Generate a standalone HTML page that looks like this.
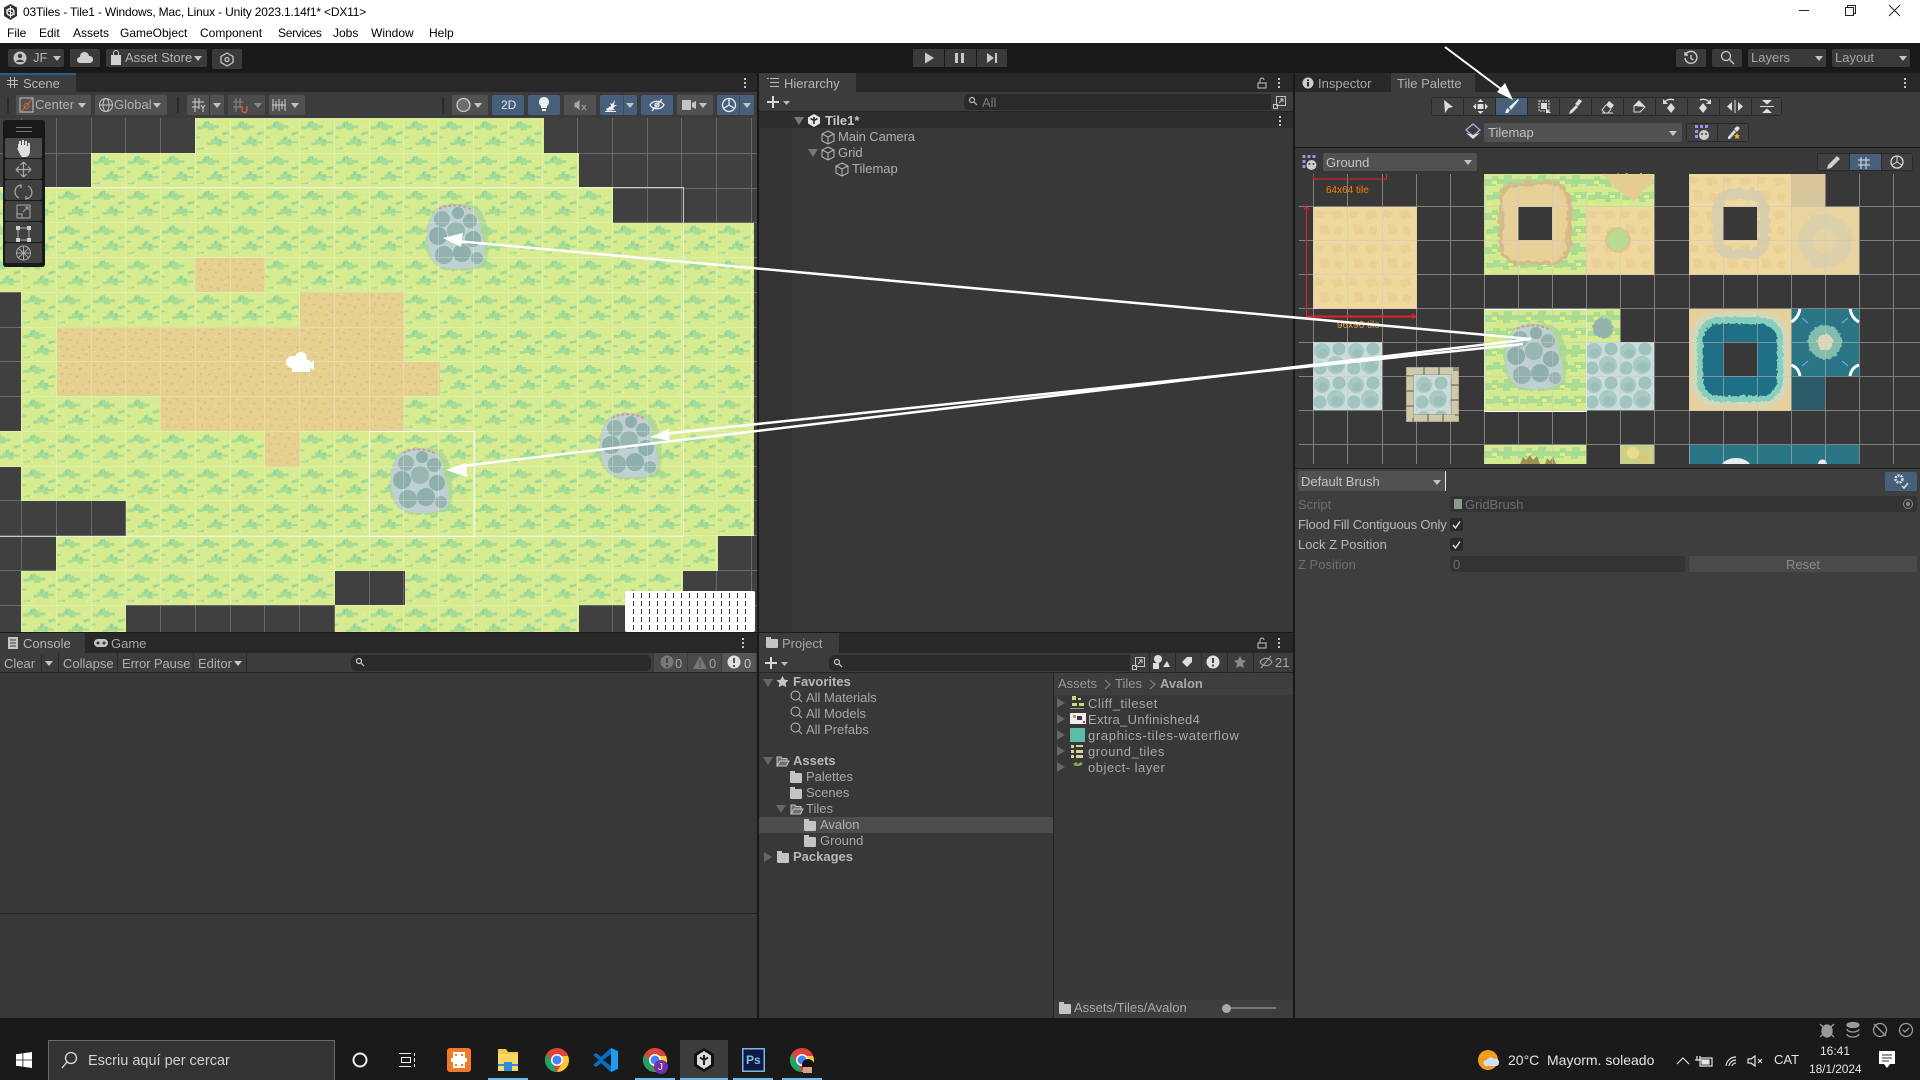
<!DOCTYPE html>
<html><head><meta charset="utf-8"><title>Unity Tile Palette</title>
<style>
html,body{margin:0;padding:0;width:1920px;height:1080px;overflow:hidden;background:#191919}
body{font:13px/16px "Liberation Sans",sans-serif;color:#bdbdbd;position:relative}
.a{position:absolute;white-space:nowrap}
.p{position:absolute}
.btn{position:absolute;background:#515151;border-radius:2px}
.top{background:#3a3a3a}
.blue{background:#46607c}
.c{position:absolute;width:0;height:0;border-left:4px solid transparent;border-right:4px solid transparent;border-top:5px solid #c4c4c4}
.tri{position:absolute;width:0;height:0;border-left:5px solid transparent;border-right:5px solid transparent;border-top:8px solid #666}
.tr{position:absolute;width:0;height:0;border-top:5px solid transparent;border-bottom:5px solid transparent;border-left:8px solid #666}
.m{font-size:12px;color:#000;top:25px;line-height:16px}
.dim{color:#7a7a7a}
.b{font-weight:bold}
.fold{position:absolute;width:12px;height:10px;background:#c4c4c4;border-radius:1px}
.fold:before{content:"";position:absolute;left:0;top:-2px;width:5px;height:3px;background:#c4c4c4}
.l{letter-spacing:.5px;color:#a8a8a8}
svg{position:absolute;overflow:visible}
</style></head><body>

<!-- title bar -->
<div class="p" style="left:0;top:0;width:1920px;height:43px;background:#fff"></div>
<svg style="left:3px;top:3px" width="15" height="18" viewBox="0 0 15 18"><path d="M7.5 1L14 4.5V13L7.5 17L1 13V4.500z" fill="#333"/><circle cx="7.500" cy="9" r="3.500" fill="none" stroke="#eee" stroke-width="1.500"/><path d="M7.500 3V15M3 6.500L12 11.500" stroke="#eee" stroke-width="1"/></svg>
<div class="a" style="left:23px;top:4px;font-size:12px;color:#000;letter-spacing:-.17px">03Tiles - Tile1 - Windows, Mac, Linux - Unity 2023.1.14f1* &lt;DX11&gt;</div>
<div class="a m" style="left:7px">File</div><div class="a m" style="left:39px">Edit</div><div class="a m" style="left:73px">Assets</div><div class="a m" style="left:120px">GameObject</div><div class="a m" style="left:200px">Component</div><div class="a m" style="left:278px;letter-spacing:-.3px">Services</div><div class="a m" style="left:333px">Jobs</div><div class="a m" style="left:371px">Window</div><div class="a m" style="left:429px">Help</div>
<svg style="left:1798px;top:3px" width="110" height="14" viewBox="0 0 110 14" fill="none" stroke="#222" stroke-width="1"><path d="M1 7.500H11"/><path d="M47.500 4.500H55.500V12.500H47.500zM49.500 4.500V2.500H57.500V10.500H55.500"/><path d="M91 2L102 13M102 2L91 13"/></svg>

<!-- main toolbar -->
<div class="btn top" style="left:8px;top:49px;width:56px;height:18px"></div>
<svg style="left:13px;top:51px" width="14" height="14" viewBox="0 0 14 14"><circle cx="7" cy="7" r="6.500" fill="#c4c4c4"/><circle cx="7" cy="5" r="2.200" fill="#3a3a3a"/><path d="M3 11c1-3 7-3 8 0" fill="#3a3a3a"/></svg>
<div class="a" style="left:33px;top:50px;color:#b5b5b5">JF</div><div class="c" style="left:53px;top:56px"></div>
<div class="btn top" style="left:70px;top:49px;width:30px;height:18px"></div>
<svg style="left:77px;top:52px" width="16" height="12" viewBox="0 0 16 12"><path d="M3 11a3 3 0 0 1 0-6a4.500 4.500 0 0 1 9-1a3.500 3.500 0 0 1 1 7z" fill="#d0d0d0"/></svg>
<div class="btn top" style="left:106px;top:49px;width:101px;height:18px"></div>
<svg style="left:110px;top:50px" width="12" height="16" viewBox="0 0 12 16"><rect x="1" y="5" width="10" height="10" fill="#d0d0d0"/><path d="M3.500 5V3a2.500 2.500 0 0 1 5 0V5" fill="none" stroke="#d0d0d0"/></svg>
<div class="a" style="left:125px;top:50px;color:#b5b5b5">Asset Store</div><div class="c" style="left:194px;top:56px"></div>
<div class="btn top" style="left:212px;top:49px;width:30px;height:20px"></div>
<svg style="left:220px;top:52px" width="14" height="15" viewBox="0 0 14 15" fill="none" stroke="#c4c4c4" stroke-width="1.300"><path d="M7 1L13 4.500V10.500L7 14L1 10.500V4.500z"/><circle cx="7" cy="7.500" r="2"/></svg>

<div class="btn top" style="left:913px;top:49px;width:31px;height:18px;border-radius:0"></div>
<div class="btn top" style="left:945px;top:49px;width:31px;height:18px;border-radius:0"></div>
<div class="btn top" style="left:977px;top:49px;width:30px;height:18px;border-radius:0"></div>
<svg style="left:913px;top:49px" width="94" height="18" viewBox="0 0 94 18" fill="#c8c8c8"><path d="M12 3.500L21 9L12 14.500z"/><rect x="42" y="4" width="3" height="10"/><rect x="48" y="4" width="3" height="10"/><path d="M74 4L81 9L74 14z"/><rect x="82" y="4" width="2" height="10"/></svg>

<div class="btn top" style="left:1676px;top:49px;width:30px;height:18px"></div>
<svg style="left:1683px;top:50px" width="16" height="16" viewBox="0 0 16 16" fill="none" stroke="#c8c8c8" stroke-width="1.400"><path d="M3 4a6 6 0 1 1-1 4M2 2V5H5M8 5V8.500L10.500 10"/></svg>
<div class="btn top" style="left:1712px;top:49px;width:30px;height:18px"></div>
<svg style="left:1720px;top:50px" width="15" height="16" viewBox="0 0 15 16" fill="none" stroke="#c8c8c8" stroke-width="1.300"><circle cx="6" cy="6" r="4.500"/><path d="M9.500 9.500L14 14"/></svg>
<div class="btn" style="left:1748px;top:49px;width:78px;height:18px;background:#3a3a3a"></div>
<div class="a" style="left:1751px;top:50px;color:#a5a5a5">Layers</div><div class="c" style="left:1815px;top:56px"></div>
<div class="btn" style="left:1832px;top:49px;width:78px;height:18px;background:#3a3a3a"></div>
<div class="a" style="left:1835px;top:50px;color:#a5a5a5">Layout</div><div class="c" style="left:1899px;top:56px"></div>

<!-- panels -->
<div class="p" style="left:0;top:73px;width:757px;height:559px;background:#282828;border-radius:3px 3px 0 0"></div>
<div class="p" style="left:0;top:73px;width:76px;height:19px;background:#3c3c3c"></div>
<div class="p" style="left:0;top:73px;width:76px;height:2px;background:#2c5d87"></div>
<div class="p" style="left:0;top:92px;width:757px;height:26px;background:#3c3c3c"></div>

<div class="p" style="left:759px;top:73px;width:534px;height:559px;background:#383838;border-radius:3px 3px 0 0"></div>
<div class="p" style="left:759px;top:73px;width:534px;height:19px;background:#282828"></div>
<div class="p" style="left:759px;top:73px;width:97px;height:19px;background:#3c3c3c"></div>
<div class="p" style="left:759px;top:92px;width:534px;height:20px;background:#3c3c3c;border-bottom:1px solid #242424;box-sizing:border-box"></div>
<div class="p" style="left:759px;top:128px;width:33px;height:504px;background:#333"></div>
<div class="p" style="left:759px;top:112px;width:534px;height:16px;background:#2e2e2e"></div>

<div class="p" style="left:1295px;top:73px;width:625px;height:945px;background:#3e3e3e"></div>
<div class="p" style="left:1295px;top:73px;width:625px;height:19px;background:#282828"></div>
<div class="p" style="left:1391px;top:73px;width:84px;height:19px;background:#3c3c3c"></div>
<div class="p" style="left:1295px;top:92px;width:625px;height:55px;background:#3c3c3c"></div>
<div class="p" style="left:1295px;top:147px;width:625px;height:1px;background:#1b1b1b"></div>
<div class="p" style="left:1295px;top:148px;width:625px;height:26px;background:#383838"></div>
<div class="p" style="left:1295px;top:174px;width:625px;height:295px;background:#383838"></div>
<div class="p" style="left:1295px;top:464px;width:625px;height:5px;background:#383838"></div>
<div class="p" style="left:1295px;top:468px;width:625px;height:1px;background:#222"></div>

<div class="p" style="left:0;top:633px;width:757px;height:385px;background:#383838;border-radius:3px 3px 0 0"></div>
<div class="p" style="left:0;top:633px;width:757px;height:20px;background:#282828"></div>
<div class="p" style="left:0;top:633px;width:85px;height:20px;background:#3c3c3c"></div>
<div class="p" style="left:0;top:653px;width:757px;height:20px;background:#3c3c3c;border-bottom:1px solid #242424;box-sizing:border-box"></div>
<div class="p" style="left:0;top:913px;width:757px;height:1px;background:#232323"></div>

<div class="p" style="left:759px;top:633px;width:534px;height:385px;background:#383838;border-radius:3px 3px 0 0"></div>
<div class="p" style="left:759px;top:633px;width:534px;height:20px;background:#282828"></div>
<div class="p" style="left:759px;top:633px;width:80px;height:20px;background:#3c3c3c"></div>
<div class="p" style="left:759px;top:653px;width:534px;height:20px;background:#3c3c3c;border-bottom:1px solid #242424;box-sizing:border-box"></div>
<div class="p" style="left:1054px;top:673px;width:239px;height:22px;background:#3e3e3e"></div>
<div class="p" style="left:1053px;top:673px;width:1px;height:345px;background:#242424"></div>
<div class="p" style="left:1054px;top:1000px;width:239px;height:18px;background:#3e3e3e"></div>

<!-- art -->
<svg style="left:0;top:0" width="1920" height="1080" viewBox="0 0 1920 1080">
<defs>
<filter id="r" x="-15%" y="-15%" width="130%" height="130%" color-interpolation-filters="sRGB"><feTurbulence type="fractalNoise" baseFrequency=".16" numOctaves="2" seed="3" result="n"/><feDisplacementMap in="SourceGraphic" in2="n" scale="8" xChannelSelector="R" yChannelSelector="G"/></filter>
<filter id="r2" x="-15%" y="-15%" width="130%" height="130%" color-interpolation-filters="sRGB"><feTurbulence type="fractalNoise" baseFrequency=".35" numOctaves="1" seed="8" result="n"/><feDisplacementMap in="SourceGraphic" in2="n" scale="5" xChannelSelector="R" yChannelSelector="G"/></filter>
<pattern id="g" patternUnits="userSpaceOnUse" x="21.300" y="118.300" width="34.750" height="34.800">
<rect width="35" height="35" fill="#d7ec90"/>
<path d="M2 8h5V6h3V3h4v2h4v2h6v3h-5v2h-6v-2h-5v1H2zM12 24h4v-3h3v-3h4v3h4v2h6v2h-6v3h-5v-2h-5v1h-5zM27 14h4v-1h3v3h-4v1h-3zM1 18h4v2H1zM2 30h4v-1h3v2H2z" fill="#a6dc94"/>
<path d="M9 4h2v4H9zM13 3h1v3h-1zM19 19h2v3h-2zM24 21h2v3h-2zM29 14h2v2h-2z" fill="#8bd2a0"/>
<path d="M28 9h2v1h-2zM1 14h2v1H1zM10 30h2v1h-2zM31 30h1v2h-1z" fill="#eef59e"/>
</pattern>
<pattern id="s" patternUnits="userSpaceOnUse" x="21.300" y="118.300" width="34.750" height="34.800">
<rect width="35" height="35" fill="#e5d08f"/>
<path d="M2 3h3v1H2zM9 5h2v2H9zM15 2h3v1h-3zM23 6h3v2h-3zM30 3h2v1h-2zM5 11h2v2H5zM13 12h3v1h-3zM20 14h2v2h-2zM28 12h3v1h-3zM3 19h3v1H3zM10 21h2v2h-2zM17 19h2v1h-2zM25 22h3v1h-3zM32 19h2v2h-2zM6 28h2v2H6zM14 29h3v1h-3zM22 30h2v2h-2zM29 27h3v1h-3z" fill="#d8bf80"/>
<path d="M7 2h1v1H7zM20 9h1v1h-1zM30 24h1v1h-1zM3 24h1v1H3zM16 25h1v1h-1z" fill="#f4e9c4"/>
</pattern>
<pattern id="pg" patternUnits="userSpaceOnUse" x="1484" y="174" width="34" height="34">
<rect width="34" height="34" fill="#d4ea8e"/>
<path d="M0 5h8V2h6v3h6V1h8v4h6v5h-8v3h-7v-3h-7v2H0zM2 21h7v-3h7v3h6v-3h12v7h-9v3h-6v-3h-9v1H2z" fill="#a8dd93"/>
<path d="M8 7h5v3H8zM24 21h5v3h-5zM3 28h4v3H3z" fill="#e9ec7e"/>
</pattern>
<pattern id="ps" patternUnits="userSpaceOnUse" x="1313" y="207" width="34" height="34">
<rect width="34" height="34" fill="#efd89e"/>
<path d="M3 3l9 2-3 6-7-1zM18 5l10-2 3 7-10 3zM6 17l9 1 2 8-9 2zM23 19l8 2-3 8-7-3z" fill="#e9d195"/>
</pattern>
<pattern id="st" patternUnits="userSpaceOnUse" x="1313" y="342" width="34" height="34">
<rect width="34" height="34" fill="#cbdcda"/>
<circle cx="9" cy="9" r="8" fill="#a6c8c2"/><circle cx="26" cy="7" r="6.500" fill="#9fc2bc"/><circle cx="7" cy="26" r="6.500" fill="#a1c4be"/><circle cx="23" cy="23" r="9" fill="#a9cac4"/>
<ellipse cx="10" cy="11" rx="5" ry="4.500" fill="#9cbfb9"/><ellipse cx="24" cy="25" rx="6" ry="5" fill="#9cbfb9"/>
</pattern>
<g id="rock">
<path d="M10 6C18-2 46-2 53 6C60 14 64 30 62 46C64 58 58 68 31 68C8 68 0 56 0 36C0 22 3 13 10 6z" fill="#a6d596" opacity=".75" filter="url(#r2)"/>
<path d="M14 4c8-4 24-4 32 2c6 6 8 14 9 24c3 10 6 22 2 30c-8 7-36 8-46 2c-8-8-10-20-10-32c0-10 5-20 13-26z" fill="#bfd0d0"/>
<circle cx="16" cy="16" r="8" fill="#96b5b1"/><circle cx="32" cy="10" r="6" fill="#8eafac"/><circle cx="44" cy="18" r="7" fill="#93b2ae"/><circle cx="12" cy="33" r="9" fill="#8eafac"/><circle cx="30" cy="28" r="9" fill="#98b7b3"/><circle cx="47" cy="36" r="8" fill="#8eafac"/><circle cx="18" cy="52" r="9" fill="#93b2ae"/><circle cx="36" cy="50" r="9" fill="#8eafac"/><circle cx="51" cy="55" r="6" fill="#96b5b1"/>
<path d="M13 6c8-5 24-5 33 1" fill="none" stroke="#c8a08c" stroke-width="2" stroke-dasharray="3 2"/>
</g>
</defs>

<!-- scene -->
<rect x="0" y="118" width="757" height="514" fill="url(#g)"/>
<path fill="#404040" d="M0 118h195v35H0zM544 118h213v35H544zM0 153h91v34H0zM579 153h178v34H579zM613 187h144v36H613zM754 223h3v313h-3zM0 292h21v139H0zM0 467h21v34H0zM0 501h126v35H0zM0 536h56v35H0zM0 571h21v61H0zM126 605h209v27H126zM335 571h70v34h-70zM718 536h39v35h-39zM683 571h74v61h-74zM579 605h104v27H579z"/>
<path fill="url(#s)" d="M195 258h70v34h-70zM300 292h104v35H300zM57 327h347v35H57zM57 362h383v34H57zM160 396h244v35H160zM265 431h35v36h-35z"/>
<use href="#rock" x="426" y="203"/><use href="#rock" x="599" y="412"/><use href="#rock" x="390" y="447"/>
<path stroke="#fff" stroke-opacity=".22" fill="none" d="M21.500 118V632M56.500 118V632M91.500 118V632M125.500 118V632M160.500 118V632M195.500 118V632M230.500 118V632M264.500 118V632M299.500 118V632M334.500 118V632M369.500 118V632M403.500 118V632M438.500 118V632M473.500 118V632M508.500 118V632M542.500 118V632M577.500 118V632M612.500 118V632M647.500 118V632M681.500 118V632M716.500 118V632M751.500 118V632M0 153.500H757M0 188.500H757M0 222.500H757M0 257.500H757M0 292.500H757M0 327.500H757M0 361.500H757M0 396.500H757M0 431.500H757M0 466.500H757M0 500.500H757M0 535.500H757M0 570.500H757M0 605.500H757"/>
<path stroke="#f2f7e8" stroke-opacity=".75" fill="none" d="M0 187.500H683.500V536.500H0"/>
<path stroke="#fff" fill="none" d="M369.500 431.500H474.500V536.500H369.500z"/>
<g fill="#fff"><circle cx="292" cy="362" r="6"/><circle cx="301" cy="358" r="6"/><rect x="292" y="360" width="18" height="12"/><path d="M310 363l4-3v10l-4-2z"/></g>
<rect x="625" y="591" width="130" height="41" rx="2" fill="#fff"/>
<g stroke="#333" stroke-width="1"><path d="M633.500 593v5M641.500 593v5M649.500 593v5M657.500 593v5M665.500 593v5M673.500 593v5M681.500 593v5M689.500 593v5M697.500 593v5M705.500 593v5M713.500 593v5M721.500 593v5M729.500 593v5M737.500 593v5M745.500 593v5"/><path d="M633.500 601v5M641.500 601v5M649.500 601v5M657.500 601v5M665.500 601v5M673.500 601v5M681.500 601v5M689.500 601v5M697.500 601v5M705.500 601v5M713.500 601v5M721.500 601v5M729.500 601v5M737.500 601v5M745.500 601v5"/><path d="M633.500 609v5M641.500 609v5M649.500 609v5M657.500 609v5M665.500 609v5M673.500 609v5M681.500 609v5M689.500 609v5M697.500 609v5M705.500 609v5M713.500 609v5M721.500 609v5M729.500 609v5M737.500 609v5M745.500 609v5"/><path d="M633.500 617v5M641.500 617v5M649.500 617v5M657.500 617v5M665.500 617v5M673.500 617v5M681.500 617v5M689.500 617v5M697.500 617v5M705.500 617v5M713.500 617v5M721.500 617v5M729.500 617v5M737.500 617v5M745.500 617v5"/><path d="M633.500 625v5M641.500 625v5M649.500 625v5M657.500 625v5M665.500 625v5M673.500 625v5M681.500 625v5M689.500 625v5M697.500 625v5M705.500 625v5M713.500 625v5M721.500 625v5M729.500 625v5M737.500 625v5M745.500 625v5"/></g>

<!-- palette tiles -->
<rect x="1313" y="207" width="104" height="102" fill="url(#ps)"/>
<rect x="1313" y="342" width="69" height="68" fill="url(#st)"/>
<rect x="1406" y="367" width="53" height="55" fill="#8f8f80"/><rect x="1414" y="375" width="37" height="39" fill="url(#st)"/><rect x="1410" y="371" width="45" height="47" fill="none" stroke="#cfc9a9" stroke-width="7" stroke-dasharray="13 2"/>
<!-- grass/sand -->
<rect x="1484" y="174" width="170" height="101" fill="url(#pg)"/>
<rect x="1586" y="207" width="68" height="68" fill="url(#ps)"/>
<path d="M1603 174h50v8c-8 6-14 16-20 20c-6-6-20-14-30-28z" fill="#e5cd92" filter="url(#r2)"/>
<g filter="url(#r2)"><circle cx="1618" cy="240" r="13" fill="#dcc48c"/><circle cx="1618" cy="240" r="10" fill="#b5de8e"/></g>
<g filter="url(#r)"><rect x="1499" y="181" width="72" height="84" rx="20" fill="#d5bb87"/><rect x="1503" y="186" width="64" height="75" rx="16" fill="#e8d198"/></g>
<rect x="1518" y="207" width="34" height="33" fill="#383838"/>
<!-- sand/water top -->
<rect x="1689" y="174" width="103" height="101" fill="url(#ps)"/>
<rect x="1791" y="174" width="34" height="33" fill="#d8c79c"/>
<rect x="1791" y="207" width="68" height="68" fill="#e9d4a0"/>
<circle cx="1825" cy="241" r="27" fill="#dbd0aa" filter="url(#r)"/>
<circle cx="1825" cy="241" r="12" fill="#e6d3a2" filter="url(#r2)"/>
<rect x="1718" y="194" width="46" height="60" rx="14" fill="none" stroke="#d9ceab" stroke-width="11" filter="url(#r)"/>
<rect x="1723" y="207" width="34" height="33" fill="#383838"/>
<!-- selected grass rock -->
<rect x="1484" y="309" width="103" height="102" fill="url(#pg)"/>
<rect x="1586" y="309" width="34" height="33" fill="url(#pg)"/>
<circle cx="1603" cy="328" r="10" fill="#93b4ad" filter="url(#r2)"/>
<rect x="1586" y="342" width="68" height="68" fill="url(#st)"/>
<use href="#rock" x="1504" y="323"/>
<rect x="1484.500" y="309.500" width="102" height="102" fill="none" stroke="#fff"/>
<!-- water -->
<rect x="1689" y="309" width="102" height="102" fill="#e7d09c"/>
<g filter="url(#r2)"><rect x="1692" y="312" width="96" height="95" rx="24" fill="#d3d8b8"/><rect x="1697" y="317" width="86" height="85" rx="22" fill="#84cfbd"/><rect x="1703" y="324" width="74" height="72" rx="16" fill="#1f6f86"/></g>
<rect x="1723" y="342" width="34" height="34" fill="#383838"/>
<rect x="1791" y="309" width="68" height="67" fill="#2a7687"/>
<circle cx="1825" cy="342" r="17" fill="#83bdae" filter="url(#r2)"/><circle cx="1825" cy="342" r="8" fill="#dcd9b4" filter="url(#r2)"/>
<path d="M1791 322c6-3 8-8 9-13M1859 322c-6-3-8-8-9-13M1791 365c6 2 8 6 9 11M1859 365c-6 2-8 6-9 11" fill="none" stroke="#fff" stroke-width="3"/>
<path d="M1802 318l6 5M1848 318l-6 5M1802 366l6-5M1848 366l-6-5" stroke="#7fb0e0" fill="none"/>
<rect x="1791" y="376" width="34" height="34" fill="#2c5a68"/>
<!-- bottom row -->
<rect x="1484" y="445" width="102" height="19" fill="url(#pg)"/>
<path d="M1520 464l3-7 3 3 4-5 3 5 4-4 3 8zM1545 464l2-6 3 3 3-4 3 7z" fill="#9b8f58"/>
<rect x="1620" y="445" width="34" height="19" fill="#c9d08a"/><circle cx="1633" cy="453" r="6" fill="#eadc88"/><circle cx="1644" cy="459" r="4" fill="#dcc874"/>
<rect x="1689" y="445" width="170" height="19" fill="#2a7687"/>
<path d="M1722 464c6-8 22-8 28 0zM1818 464c1-6 8-6 9 0z" fill="#e8eef0"/>
<path stroke="#c8c8c8" stroke-opacity=".5" fill="none" d="M1313.500 174V464M1347.500 174V464M1382.500 174V464M1416.500 174V464M1450.500 174V464M1484.500 174V464M1518.500 174V464M1552.500 174V464M1586.500 174V464M1620.500 174V464M1654.500 174V464M1689.500 174V464M1723.500 174V464M1757.500 174V464M1791.500 174V464M1825.500 174V464M1859.500 174V464M1893.500 174V464M1299 206.500H1920M1299 240.500H1920M1299 274.500H1920M1299 308.500H1920M1299 342.500H1920M1299 376.500H1920M1299 410.500H1920M1299 444.500H1920"/>
<!-- red measures -->
<path d="M1313.500 175v4h73v-5M1306.500 207V316" stroke="#e8202a" stroke-width="1" fill="none"/>
<path d="M1306 316.500H1415" stroke="#e8202a" stroke-width="2"/>
<path d="M1304 210l2.500-4 2.500 4M1412 314l4 2.500-4 2.500" stroke="#e8202a" fill="none"/>
</svg>
<div class="a" style="left:1326px;top:183px;font-size:10px;color:#ff7a00">64x64 tile</div>
<div class="a" style="left:1337px;top:318px;font-size:10px;color:#e8a040">96x96 tile</div>

<!-- scene tab + toolbar -->
<svg style="left:7px;top:77px" width="11" height="11" viewBox="0 0 11 11" stroke="#bbb" fill="none"><path d="M3.500 0V11M7.500 0V11M0 3.500H11M0 7.500H11"/></svg>
<div class="a" style="left:23px;top:76px;color:#b8b8b8">Scene</div>
<svg style="left:743px;top:76px" width="4" height="14" viewBox="0 0 4 14" fill="#c4c4c4"><rect x="1" y="2" width="2" height="2"/><rect x="1" y="6" width="2" height="2"/><rect x="1" y="10" width="2" height="2"/></svg>
<div class="p" style="left:7px;top:97px;width:2px;height:16px;background:#2a2a2a"></div>
<div class="btn" style="left:16px;top:95px;width:75px;height:20px"></div>
<svg style="left:19px;top:97px" width="15" height="16" viewBox="0 0 15 16"><rect x="1" y="1" width="13" height="14" fill="none" stroke="#c4c4c4"/><circle cx="7.500" cy="9" r="2.500" fill="none" stroke="#e0603c"/><path d="M3 14L13 2" stroke="#e0603c"/></svg>
<div class="a" style="left:35px;top:97px;color:#b0b0b0">Center</div><div class="c" style="left:78px;top:103px"></div>
<div class="btn" style="left:95px;top:95px;width:72px;height:20px"></div>
<svg style="left:98px;top:97px" width="16" height="16" viewBox="0 0 16 16" fill="none" stroke="#c4c4c4"><circle cx="8" cy="8" r="6.500"/><ellipse cx="8" cy="8" rx="3" ry="6.500"/><path d="M1.500 8H14.500"/></svg>
<div class="a" style="left:114px;top:97px;color:#b0b0b0">Global</div><div class="c" style="left:153px;top:103px"></div>
<div class="p" style="left:177px;top:97px;width:2px;height:16px;background:#2a2a2a"></div>
<div class="btn" style="left:187px;top:95px;width:37px;height:20px"></div>
<div class="p" style="left:209px;top:95px;width:1px;height:20px;background:#333"></div>
<svg style="left:191px;top:97px" width="15" height="16" viewBox="0 0 15 16" stroke="#d0d0d0" fill="none"><path d="M4 1V15M8 1V12M1 5H13M1 10H8M10 8l2 3 2-3M12 11v4"/></svg><div class="c" style="left:213px;top:103px"></div>
<div class="btn" style="left:228px;top:95px;width:37px;height:20px;opacity:.7"></div>
<svg style="left:232px;top:97px" width="16" height="16" viewBox="0 0 16 16" stroke="#888" fill="none"><path d="M4 1V15M8 1V11M1 5H11M1 10H9"/><path d="M10 9v4a2.500 2.500 0 0 0 5 0V9" stroke="#d85a30" stroke-width="1.500"/></svg><div class="c" style="left:254px;top:103px;border-top-color:#888"></div>
<div class="btn" style="left:269px;top:95px;width:36px;height:20px"></div>
<svg style="left:272px;top:98px" width="15" height="14" viewBox="0 0 15 14" stroke="#d0d0d0" fill="none"><path d="M1 1V13M4 3V11M7 1V13M10 3V11M13 1V13M0 7H14"/></svg><div class="c" style="left:291px;top:103px"></div>
<div class="p" style="left:442px;top:97px;width:2px;height:16px;background:#2a2a2a"></div>
<div class="btn" style="left:452px;top:95px;width:36px;height:20px"></div>
<svg style="left:456px;top:97px" width="15" height="16" viewBox="0 0 15 16"><circle cx="7.500" cy="8" r="6.500" fill="#6e6e6e" stroke="#c8c8c8" stroke-width="1.300"/><path d="M11 3a6 6 0 0 1-6 11a6 6 0 0 0 9-5" fill="#c8c8c8"/></svg><div class="c" style="left:474px;top:103px"></div>
<div class="btn blue" style="left:492px;top:95px;width:32px;height:20px"></div>
<div class="a" style="left:501px;top:97px;color:#e4e4e4;font-size:12px">2D</div>
<div class="btn blue" style="left:528px;top:95px;width:32px;height:20px"></div>
<svg style="left:538px;top:96px" width="12" height="18" viewBox="0 0 12 18" fill="#eee"><path d="M6 1a5 5 0 0 1 3 9v2H3v-2a5 5 0 0 1 3-9z"/><rect x="4" y="13" width="4" height="2"/></svg>
<div class="btn" style="left:564px;top:95px;width:32px;height:20px"></div>
<svg style="left:574px;top:98px" width="14" height="14" viewBox="0 0 14 14" stroke="#aaa" fill="#aaa"><path d="M1 5H3L5 3V11L3 9H1z"/><path d="M8 7l4 5M12 7l-4 5" fill="none"/></svg>
<div class="btn blue" style="left:600px;top:95px;width:37px;height:20px"></div>
<div class="p" style="left:623px;top:95px;width:1px;height:20px;background:#3a4d63"></div>
<svg style="left:603px;top:97px" width="17" height="16" viewBox="0 0 17 16" fill="#eee"><path d="M3 12l5-3-1-3 2 1 3-4-1 5 3 0-4 3 2 2-8 1z"/><path d="M2 14h11v1H2z"/></svg><div class="c" style="left:626px;top:103px"></div>
<div class="btn blue" style="left:641px;top:95px;width:32px;height:20px"></div>
<svg style="left:649px;top:97px" width="16" height="16" viewBox="0 0 16 16" stroke="#eee" fill="none" stroke-width="1.300"><path d="M1 8c3-5 11-5 14 0c-3 5-11 5-14 0z"/><circle cx="8" cy="8" r="2"/><path d="M3 14L13 2"/></svg>
<div class="btn" style="left:677px;top:95px;width:36px;height:20px"></div>
<svg style="left:682px;top:99px" width="14" height="12" viewBox="0 0 14 12" fill="#c4c4c4"><rect x="0" y="1" width="9" height="10"/><path d="M10 4l4-2v8l-4-2z"/></svg><div class="c" style="left:699px;top:103px"></div>
<div class="btn blue" style="left:717px;top:95px;width:37px;height:20px"></div>
<div class="p" style="left:739px;top:95px;width:1px;height:20px;background:#3a4d63"></div>
<svg style="left:721px;top:97px" width="16" height="16" viewBox="0 0 16 16" fill="none" stroke="#eee" stroke-width="1.300"><circle cx="8" cy="8" r="6.500"/><path d="M8 1.500V8M8 8L2.500 11.500M8 8L13.500 11.500"/></svg><div class="c" style="left:743px;top:103px"></div>

<!-- tools overlay -->
<div class="p" style="left:3px;top:120px;width:42px;height:147px;background:#191919;border-radius:3px"></div>
<div class="p" style="left:16px;top:127px;width:16px;height:1px;background:#777"></div><div class="p" style="left:16px;top:131px;width:16px;height:1px;background:#777"></div>
<div class="btn" style="left:5px;top:138px;width:37px;height:20px;background:#4c4c4c"></div>
<div class="btn" style="left:5px;top:159px;width:37px;height:20px;background:#404040"></div>
<div class="btn" style="left:5px;top:180px;width:37px;height:20px;background:#404040"></div>
<div class="btn" style="left:5px;top:201px;width:37px;height:20px;background:#404040"></div>
<div class="btn" style="left:5px;top:222px;width:37px;height:20px;background:#404040"></div>
<div class="btn" style="left:5px;top:243px;width:37px;height:20px;background:#404040"></div>
<svg style="left:5px;top:138px" width="37" height="126" viewBox="0 0 37 126">
<path d="M13 10V6h1V3h2v4h1V2h2v5h1V3h2v5h1V5h2v8c0 4-2 6-5 6h-3c-2-2-3-5-5-9z" fill="#ddd"/>
<path d="M18.500 24V39M11 31.500H26M18.500 24l-3 3M18.500 24l3 3M18.500 39l-3-3M18.500 39l3-3M11 31.500l3-3M11 31.500l3 3M26 31.500l-3-3M26 31.500l-3 3" stroke="#aaa" fill="none" stroke-width="1.200"/>
<path d="M23 48a7 7 0 0 1 1 12M14 60a7 7 0 0 1-1-12M13 48l3-1v3M24 60l-3 1v-3" stroke="#aaa" fill="none" stroke-width="1.200"/>
<path d="M12 67h13v13H12zM12 76h5v4M18 74l5-5M20 69h3v3" stroke="#aaa" fill="none"/>
<path d="M13 90h11v12H13z" stroke="#aaa" fill="none"/><path d="M11 88h4v4h-4zM22 88h4v4h-4zM11 100h4v4h-4zM22 100h4v4h-4z" fill="#ccc"/>
<circle cx="18.500" cy="115" r="7" stroke="#aaa" fill="none"/><path d="M18.500 108V122M11.500 115H25.500M13 110l11 10M24 110l-11 10" stroke="#aaa" fill="none"/>
</svg>

<!-- hierarchy -->
<svg style="left:767px;top:77px" width="12" height="11" viewBox="0 0 12 11" stroke="#bbb" fill="none"><path d="M3 1.500H12M3 5.500H12M3 9.500H12"/><path d="M0 1.500H2"/></svg>
<div class="a" style="left:784px;top:76px;color:#b8b8b8">Hierarchy</div>
<svg style="left:1256px;top:76px" width="30" height="14" viewBox="0 0 30 14" fill="none"><rect x="2" y="7" width="8" height="5" stroke="#c4c4c4"/><path d="M4 7V4a2 2 0 0 1 4 0" stroke="#c4c4c4"/><rect x="22" y="2" width="2" height="2" fill="#c4c4c4"/><rect x="22" y="6" width="2" height="2" fill="#c4c4c4"/><rect x="22" y="10" width="2" height="2" fill="#c4c4c4"/></svg>
<svg style="left:767px;top:96px" width="24" height="13" viewBox="0 0 24 13"><path d="M6 0V12M0 6H12" stroke="#d8d8d8" stroke-width="2"/><path d="M16 5h7l-3.500 4z" fill="#bbb"/></svg>
<div class="p" style="left:964px;top:94px;width:324px;height:16px;background:#2a2a2a;border-radius:5px"></div>
<svg style="left:968px;top:96px" width="12" height="12" viewBox="0 0 12 12" fill="none" stroke="#bbb" stroke-width="1.200"><circle cx="4" cy="4" r="2.500"/><path d="M6 6L9 9"/></svg>
<div class="a dim" style="left:982px;top:95px">All</div>
<div class="p" style="left:1271px;top:94px;width:17px;height:16px;background:#3c3c3c"></div>
<svg style="left:1273px;top:96px" width="13" height="13" viewBox="0 0 13 13" fill="none" stroke="#c4c4c4"><rect x="3.500" y="0.500" width="9" height="9"/><rect x="0.500" y="8.500" width="4" height="4"/><path d="M6 7L10 3M7 3h3v3"/></svg>
<div class="tri" style="left:794px;top:117px;border-top-color:#777"></div>
<svg style="left:807px;top:113px" width="14" height="15" viewBox="0 0 14 15"><path d="M7 1L13 4.500V10.500L7 14L1 10.500V4.500z" fill="#e8e8e8"/><path d="M7 4V11M3.500 5.500L7 7.500L10.500 5.500" stroke="#2e2e2e" stroke-width="1.600" fill="none"/></svg>
<div class="a b" style="left:825px;top:113px;color:#c8c8c8">Tile1*</div>
<svg style="left:1278px;top:115px" width="4" height="12" viewBox="0 0 4 12" fill="#c4c4c4"><rect x="1" y="1" width="2" height="2"/><rect x="1" y="5" width="2" height="2"/><rect x="1" y="9" width="2" height="2"/></svg>
<svg style="left:821px;top:130px" width="14" height="15" viewBox="0 0 14 15" fill="none" stroke="#bbb"><path d="M7 1L13 4V11L7 14L1 11V4zM1 4L7 7L13 4M7 7V14"/></svg>
<div class="a" style="left:838px;top:129px;color:#b0b0b0;letter-spacing:-.1px">Main Camera</div>
<div class="tri" style="left:808px;top:149px;border-top-color:#777"></div>
<svg style="left:821px;top:146px" width="14" height="15" viewBox="0 0 14 15" fill="none" stroke="#bbb"><path d="M7 1L13 4V11L7 14L1 11V4zM1 4L7 7L13 4M7 7V14"/></svg>
<div class="a" style="left:838px;top:145px;color:#b0b0b0">Grid</div>
<svg style="left:835px;top:162px" width="14" height="15" viewBox="0 0 14 15" fill="none" stroke="#bbb"><path d="M7 1L13 4V11L7 14L1 11V4zM1 4L7 7L13 4M7 7V14"/></svg>
<div class="a" style="left:852px;top:161px;color:#b0b0b0">Tilemap</div>

<!-- palette header -->
<svg style="left:1302px;top:77px" width="12" height="12" viewBox="0 0 12 12"><circle cx="6" cy="6" r="5.500" fill="#ccc"/><rect x="5" y="5" width="2" height="4.500" fill="#282828"/><rect x="5" y="2.500" width="2" height="1.600" fill="#282828"/></svg>
<div class="a" style="left:1318px;top:76px;color:#a8a8a8">Inspector</div>
<div class="a" style="left:1397px;top:76px;color:#b0b0b0">Tile Palette</div>
<svg style="left:1903px;top:76px" width="4" height="14" viewBox="0 0 4 14" fill="#c4c4c4"><rect x="1" y="2" width="2" height="2"/><rect x="1" y="6" width="2" height="2"/><rect x="1" y="10" width="2" height="2"/></svg>

<!-- palette tools -->
<div class="p" style="left:1431px;top:97px;width:351px;height:19px;background:#2a2a2a;border-radius:3px"></div>
<div class="p" style="left:1432px;top:98px;width:31px;height:17px;background:#404040"></div>
<div class="p" style="left:1464px;top:98px;width:31px;height:17px;background:#404040"></div>
<div class="p" style="left:1496px;top:98px;width:31px;height:17px;background:#46607c"></div>
<div class="p" style="left:1528px;top:98px;width:31px;height:17px;background:#404040"></div>
<div class="p" style="left:1560px;top:98px;width:31px;height:17px;background:#404040"></div>
<div class="p" style="left:1592px;top:98px;width:31px;height:17px;background:#404040"></div>
<div class="p" style="left:1624px;top:98px;width:31px;height:17px;background:#404040"></div>
<div class="p" style="left:1656px;top:98px;width:31px;height:17px;background:#404040"></div>
<div class="p" style="left:1688px;top:98px;width:31px;height:17px;background:#404040"></div>
<div class="p" style="left:1720px;top:98px;width:31px;height:17px;background:#404040"></div>
<div class="p" style="left:1752px;top:98px;width:29px;height:17px;background:#404040"></div>
<svg style="left:1431px;top:97px" width="352" height="19" viewBox="0 0 352 19" fill="#ddd">
<path d="M13 3L22 10L17.500 11L14 16z"/>
<path d="M49.500 2l3 3h-6zM49.500 17l3-3h-6zM42 9.500l3-3v6zM57 9.500l-3-3v6z"/><rect x="46.500" y="7" width="6" height="5"/>
<path d="M74 16l2-5 3 2-2 3zM78 10l9-8 1 1-8 10z" fill="#eee"/>
<path d="M108 4h10v10h-10z" fill="none" stroke="#ddd" stroke-dasharray="2 1"/><rect x="110" y="6" width="6" height="6"/><path d="M115 11l5 5h-5z"/>
<path d="M138 17l1-3 6-6 2 2-6 6zM145 6l3-4 3 2-3 4-1 1-3-2z"/>
<path d="M175 8l3-4 5 4-3 4z"/><path d="M175 8l-4 5 3 3h3l3-4M171 16h11" fill="none" stroke="#ddd"/>
<path d="M203 15V9l5-5 6 6-5 5z" fill="none" stroke="#ddd"/><path d="M203 9l5-5 6 6z"/>
<path d="M240 6l4 5-4 5-4-5z"/><path d="M233 6a8 8 0 0 1 10-3" fill="none" stroke="#ddd" stroke-width="1.300"/><path d="M232 2v5h5z"/>
<path d="M272 6l4 5-4 5-4-5z"/><path d="M279 6a8 8 0 0 0-10-3" fill="none" stroke="#ddd" stroke-width="1.300"/><path d="M280 2v5h-5z"/>
<path d="M301 5v9l-5-4.500zM307 5v9l5-4.500z"/><path d="M304 3V16" stroke="#ddd"/>
<path d="M331 3h10l-5 4.500zM331 16h10l-5-4.500z"/><path d="M329 9.500h14" stroke="#ddd"/>
</svg>
<svg style="left:1465px;top:123px" width="16" height="18" viewBox="0 0 16 18"><path d="M8 1L15 7L8 13L1 7z" fill="none" stroke="#b8a8e8" stroke-width="1.300"/><path d="M1 10L8 16L15 10L8 12z" fill="#ddd"/></svg>
<div class="btn" style="left:1484px;top:123px;width:198px;height:19px;background:#515151"></div>
<div class="a" style="left:1488px;top:125px;color:#c4c4c4">Tilemap</div><div class="c" style="left:1669px;top:131px"></div>
<div class="p" style="left:1686px;top:123px;width:63px;height:19px;background:#2a2a2a;border-radius:3px"></div>
<div class="p" style="left:1687px;top:124px;width:30px;height:17px;background:#404040"></div><div class="p" style="left:1718px;top:124px;width:30px;height:17px;background:#404040"></div>
<svg style="left:1695px;top:125px" width="14" height="15" viewBox="0 0 14 15"><path d="M0 0h3v3H0zM5 0h3v3H5zM10 0h3v3h-3zM0 5h3v3H0zM0 10h3v3H0z" fill="#a78cf0"/><circle cx="9" cy="10" r="5" fill="#ccc"/><circle cx="7" cy="9" r="1" fill="#444"/><circle cx="11" cy="9" r="1" fill="#444"/></svg>
<svg style="left:1726px;top:125px" width="15" height="15" viewBox="0 0 15 15"><path d="M2 12l6-7 2 2-6 7H2zM8 4l3-3 3 2-3 4z" fill="#ddd"/><path d="M11 8l1 2 2 .3-1.500 1.500.4 2.200-1.900-1-1.900 1 .4-2.200L8 10.300l2-.3z" fill="#f4b400"/></svg>

<svg style="left:1302px;top:155px" width="15" height="15" viewBox="0 0 14 15"><path d="M0 0h3v3H0zM5 0h3v3H5zM10 0h3v3h-3zM0 5h3v3H0zM0 10h3v3H0z" fill="#a78cf0"/><circle cx="9" cy="10" r="5" fill="#ccc"/><circle cx="7" cy="9" r="1" fill="#444"/><circle cx="11" cy="9" r="1" fill="#444"/></svg>
<div class="btn" style="left:1323px;top:153px;width:154px;height:18px;background:#515151"></div>
<div class="a" style="left:1326px;top:155px;color:#c4c4c4">Ground</div><div class="c" style="left:1464px;top:160px"></div>
<div class="p" style="left:1817px;top:153px;width:96px;height:18px;background:#2a2a2a;border-radius:3px"></div>
<div class="p" style="left:1818px;top:154px;width:31px;height:16px;background:#404040"></div><div class="p" style="left:1850px;top:154px;width:31px;height:16px;background:#46607c"></div><div class="p" style="left:1882px;top:154px;width:30px;height:16px;background:#404040"></div>
<svg style="left:1825px;top:154px" width="85" height="16" viewBox="0 0 85 16"><path d="M2 15l1-4 9-9 3 3-9 9z" fill="#d0d0d0"/><path d="M36 3V15M41 3V15M33 6H45M33 11H45" stroke="#e0e0e0" fill="none"/><circle cx="72" cy="8" r="6" stroke="#d8d8d8" stroke-width="1.300" fill="none"/><path d="M72 2V8M72 8L67 11M72 8L77 11" stroke="#d8d8d8" fill="none"/></svg>

<!-- brush -->
<div class="btn" style="left:1298px;top:471px;width:147px;height:20px;background:#515151"></div>
<div class="a" style="left:1301px;top:474px;color:#c4c4c4">Default Brush</div><div class="c" style="left:1433px;top:480px"></div>
<div class="p" style="left:1445px;top:471px;width:1px;height:20px;background:#e8e8e8"></div>
<div class="btn blue" style="left:1885px;top:472px;width:32px;height:19px"></div>
<svg style="left:1893px;top:473px" width="16" height="16" viewBox="0 0 16 16" fill="none"><circle cx="6" cy="6" r="3.500" stroke="#ddd" stroke-width="2.500" stroke-dasharray="2 1"/><path d="M9 13l2 2 4-5" stroke="#ddd" stroke-width="1.500"/></svg>
<div class="a" style="left:1298px;top:497px;color:#6e6e6e">Script</div>
<div class="p" style="left:1450px;top:496px;width:467px;height:16px;background:#333;border-radius:3px"></div>
<div class="p" style="left:1454px;top:499px;width:8px;height:10px;background:#8a9a8a"></div>
<div class="a" style="left:1465px;top:497px;color:#6e6e6e">GridBrush</div>
<svg style="left:1902px;top:498px" width="12" height="12" viewBox="0 0 12 12" fill="none" stroke="#888"><circle cx="6" cy="6" r="4.500"/><circle cx="6" cy="6" r="1.500" fill="#888"/></svg>
<div class="a" style="left:1298px;top:517px;color:#b8b8b8;letter-spacing:-.15px">Flood Fill Contiguous Only</div>
<div class="p" style="left:1450px;top:518px;width:13px;height:13px;background:#2a2a2a;border-radius:2px"></div>
<div class="a" style="left:1298px;top:537px;color:#b8b8b8">Lock Z Position</div>
<div class="p" style="left:1450px;top:538px;width:13px;height:13px;background:#2a2a2a;border-radius:2px"></div>
<svg style="left:1450px;top:518px" width="13" height="33" viewBox="0 0 13 33" fill="none" stroke="#e0e0e0" stroke-width="1.400"><path d="M3 7L5.500 10L10 3.500M3 27L5.500 30L10 23.500"/></svg>
<div class="a" style="left:1298px;top:557px;color:#6e6e6e">Z Position</div>
<div class="p" style="left:1450px;top:556px;width:235px;height:16px;background:#333;border-radius:3px"></div>
<div class="a" style="left:1453px;top:557px;color:#6e6e6e">0</div>
<div class="p" style="left:1689px;top:556px;width:228px;height:16px;background:#4a4a4a;border-radius:2px"></div>
<div class="a" style="left:1786px;top:557px;color:#8a8a8a">Reset</div>

<!-- console -->
<svg style="left:8px;top:637px" width="10" height="12" viewBox="0 0 10 12"><rect width="10" height="12" fill="#c4c4c4"/><path d="M2 3h6M2 6h6M2 9h6" stroke="#3c3c3c"/></svg>
<div class="a" style="left:23px;top:636px;color:#b8b8b8">Console</div>
<svg style="left:94px;top:639px" width="14" height="9" viewBox="0 0 14 9"><rect y="0" width="14" height="8" rx="4" fill="#c4c4c4"/><circle cx="4" cy="4" r="1.500" fill="#333"/><circle cx="10" cy="4" r="1.500" fill="#333"/></svg>
<div class="a" style="left:111px;top:636px;color:#a8a8a8">Game</div>
<svg style="left:741px;top:636px" width="4" height="14" viewBox="0 0 4 14" fill="#c4c4c4"><rect x="1" y="2" width="2" height="2"/><rect x="1" y="6" width="2" height="2"/><rect x="1" y="10" width="2" height="2"/></svg>
<div class="a" style="left:4px;top:656px;color:#b0b0b0">Clear</div>
<div class="p" style="left:41px;top:654px;width:1px;height:18px;background:#2a2a2a"></div><div class="c" style="left:45px;top:661px"></div>
<div class="p" style="left:58px;top:653px;width:1px;height:20px;background:#2a2a2a"></div>
<div class="a" style="left:63px;top:656px;color:#b0b0b0">Collapse</div>
<div class="p" style="left:117px;top:653px;width:1px;height:20px;background:#2a2a2a"></div>
<div class="a" style="left:122px;top:656px;color:#b0b0b0;letter-spacing:-.1px">Error Pause</div>
<div class="p" style="left:193px;top:653px;width:1px;height:20px;background:#2a2a2a"></div>
<div class="a" style="left:198px;top:656px;color:#b0b0b0">Editor</div><div class="c" style="left:234px;top:661px"></div>
<div class="p" style="left:246px;top:653px;width:1px;height:20px;background:#2a2a2a"></div>
<div class="p" style="left:351px;top:655px;width:300px;height:16px;background:#2a2a2a;border-radius:5px"></div>
<svg style="left:355px;top:657px" width="12" height="12" viewBox="0 0 12 12" fill="none" stroke="#ccc" stroke-width="1.200"><circle cx="4" cy="4" r="2.500"/><path d="M6 6L9 9"/></svg>
<div class="p" style="left:654px;top:653px;width:33px;height:19px;background:#4a4a4a"></div><div class="p" style="left:688px;top:653px;width:33px;height:19px;background:#4a4a4a"></div><div class="p" style="left:722px;top:653px;width:34px;height:19px;background:#555"></div>
<svg style="left:660px;top:655px" width="90" height="16" viewBox="0 0 90 16"><circle cx="7" cy="7" r="6.500" fill="#777"/><path d="M7 3v5M7 10v2" stroke="#444" stroke-width="2"/><path d="M40 1L47 14H33z" fill="#777"/><path d="M40 5v5M40 11v2" stroke="#444"/><circle cx="74" cy="7" r="6.500" fill="#e0e0e0"/><path d="M74 3v5M74 10v2" stroke="#555" stroke-width="2"/></svg>
<div class="a dim" style="left:675px;top:656px;color:#a0a0a0">0</div><div class="a" style="left:709px;top:656px;color:#a0a0a0">0</div><div class="a" style="left:744px;top:656px;color:#c0c0c0">0</div>

<!-- project -->
<div class="fold" style="left:766px;top:639px;width:12px;height:9px"></div>
<div class="a" style="left:782px;top:636px;color:#a8a8a8">Project</div>
<svg style="left:1256px;top:636px" width="30" height="14" viewBox="0 0 30 14" fill="none"><rect x="2" y="7" width="8" height="5" stroke="#c4c4c4"/><path d="M4 7V4a2 2 0 0 1 4 0" stroke="#c4c4c4"/><rect x="22" y="2" width="2" height="2" fill="#c4c4c4"/><rect x="22" y="6" width="2" height="2" fill="#c4c4c4"/><rect x="22" y="10" width="2" height="2" fill="#c4c4c4"/></svg>
<svg style="left:765px;top:657px" width="24" height="13" viewBox="0 0 24 13"><path d="M6 0V12M0 6H12" stroke="#d8d8d8" stroke-width="2"/><path d="M16 5h7l-3.500 4z" fill="#bbb"/></svg>
<div class="p" style="left:829px;top:655px;width:318px;height:16px;background:#2a2a2a;border-radius:5px"></div>
<svg style="left:833px;top:658px" width="12" height="12" viewBox="0 0 12 12" fill="none" stroke="#ccc" stroke-width="1.200"><circle cx="4" cy="4" r="2.500"/><path d="M6 6L9 9"/></svg>
<div class="p" style="left:1130px;top:655px;width:17px;height:16px;background:#3c3c3c"></div>
<svg style="left:1132px;top:657px" width="13" height="13" viewBox="0 0 13 13" fill="none" stroke="#c4c4c4"><rect x="3.500" y="0.500" width="9" height="9"/><rect x="0.500" y="8.500" width="4" height="4"/><path d="M6 7L10 3M7 3h3v3"/></svg>
<svg style="left:1151px;top:654px" width="140" height="18" viewBox="0 0 140 18"><circle cx="7" cy="5" r="4" fill="#ddd"/><rect x="2" y="9" width="6" height="6" fill="#ddd"/><path d="M12 13l4-6 3 6z" fill="#ddd"/></svg>
<svg style="left:1150px;top:654px" width="140" height="18" viewBox="0 0 140 18"><path d="M32 8l5-5h5v5l-5 5z" fill="#ddd"/><circle cx="63" cy="8" r="6.500" fill="#e0e0e0"/><path d="M63 4v5M63 10.500v2" stroke="#444" stroke-width="2"/><path d="M90 2l2 4 4 .5-3 3 .8 4.500-3.800-2-3.800 2 .8-4.500-3-3 4-.5z" fill="#8a8a8a"/><path d="M110 8c3-5 9-5 12 0c-3 5-9 5-12 0zM111 14L121 2" stroke="#aaa" fill="none"/></svg>
<div class="a" style="left:1275px;top:655px;color:#a8a8a8">21</div>
<div class="p" style="left:1175px;top:653px;width:1px;height:20px;background:#2a2a2a"></div><div class="p" style="left:1201px;top:653px;width:1px;height:20px;background:#2a2a2a"></div><div class="p" style="left:1227px;top:653px;width:1px;height:20px;background:#2a2a2a"></div><div class="p" style="left:1253px;top:653px;width:1px;height:20px;background:#2a2a2a"></div><div class="p" style="left:1149px;top:653px;width:1px;height:20px;background:#2a2a2a"></div>
<div class="tri" style="left:763px;top:679px"></div>
<svg style="left:776px;top:675px" width="13" height="13" viewBox="0 0 14 14"><path d="M7 1l2 4 4.500.6-3.200 3 .8 4.400L7 11l-4.100 2 .8-4.400-3.200-3L5 5z" fill="#c4c4c4"/></svg>
<div class="a b" style="left:793px;top:674px;color:#b8b8b8">Favorites</div>
<svg style="left:790px;top:690px" width="13" height="46" viewBox="0 0 13 46" fill="none" stroke="#bbb"><circle cx="5.500" cy="5.500" r="4.500"/><path d="M9 9l3 3"/><circle cx="5.500" cy="21.500" r="4.500"/><path d="M9 25l3 3"/><circle cx="5.500" cy="37.500" r="4.500"/><path d="M9 41l3 3"/></svg>
<div class="a" style="left:806px;top:690px;color:#a8a8a8">All Materials</div>
<div class="a" style="left:806px;top:706px;color:#a8a8a8">All Models</div>
<div class="a" style="left:806px;top:722px;color:#a8a8a8">All Prefabs</div>
<div class="tri" style="left:763px;top:757px"></div>
<svg style="left:776px;top:755px" width="14" height="12" viewBox="0 0 14 12" fill="none" stroke="#c4c4c4"><path d="M1 11V2h4l1 1.500h5V6M1 11l3-5h9l-2.500 5z" fill="#c4c4c4" fill-opacity=".4"/></svg>
<div class="a b" style="left:793px;top:753px;color:#b8b8b8">Assets</div>
<div class="fold" style="left:790px;top:773px"></div><div class="a" style="left:806px;top:769px;color:#a8a8a8">Palettes</div>
<div class="fold" style="left:790px;top:789px"></div><div class="a" style="left:806px;top:785px;color:#a8a8a8">Scenes</div>
<div class="tri" style="left:776px;top:805px"></div>
<svg style="left:790px;top:803px" width="14" height="12" viewBox="0 0 14 12" fill="none" stroke="#c4c4c4"><path d="M1 11V2h4l1 1.500h5V6M1 11l3-5h9l-2.500 5z" fill="#c4c4c4" fill-opacity=".4"/></svg>
<div class="a" style="left:806px;top:801px;color:#a8a8a8">Tiles</div>
<div class="p" style="left:759px;top:817px;width:294px;height:16px;background:#4d4d4d"></div>
<div class="fold" style="left:804px;top:821px"></div><div class="a" style="left:820px;top:817px;color:#b0b0b0">Avalon</div>
<div class="fold" style="left:804px;top:837px"></div><div class="a" style="left:820px;top:833px;color:#a8a8a8">Ground</div>
<div class="tr" style="left:764px;top:852px"></div>
<div class="fold" style="left:777px;top:853px"></div><div class="a b" style="left:793px;top:849px;color:#b8b8b8">Packages</div>
<div class="a" style="left:1058px;top:676px;color:#999">Assets</div>
<svg style="left:1103px;top:679px" width="10" height="11" viewBox="0 0 10 11" fill="none" stroke="#888"><path d="M2 1L7 5.500L2 10"/></svg>
<div class="a" style="left:1115px;top:676px;color:#999">Tiles</div>
<svg style="left:1148px;top:679px" width="10" height="11" viewBox="0 0 10 11" fill="none" stroke="#888"><path d="M2 1L7 5.500L2 10"/></svg>
<div class="a b" style="left:1160px;top:676px;color:#a8a8a8">Avalon</div>
<div class="tr" style="left:1057px;top:698px"></div><div class="tr" style="left:1057px;top:714px"></div><div class="tr" style="left:1057px;top:730px"></div><div class="tr" style="left:1057px;top:746px"></div><div class="tr" style="left:1057px;top:762px"></div>
<svg style="left:1070px;top:695px" width="16" height="80" viewBox="0 0 16 80"><path d="M2 1h4v4H2zM8 3h3v2H8zM2 8h5v3H2zM9 8h5v3H9z" fill="#c6d97a"/><path d="M0 13h14v1H0z" fill="#999"/><rect y="18" width="16" height="11" fill="#eee"/><rect x="7" y="21" width="5" height="4" fill="#443344"/><rect x="3" y="20" width="3" height="3" fill="#b59a8a"/><rect x="13" y="26" width="2" height="2" fill="#d33"/><rect x="0" y="33" width="15" height="14" fill="#5cbca8"/><path d="M1 50h3v3H1zM6 50h7v2H6zM1 55h3v3H1zM6 55h7v3H6zM1 60h3v3H1zM6 60h7v3H6z" fill="#d8cf90"/><path d="M3 69l3-2 2 2 3-2 2 2-3 2h-5z" fill="#87a65a"/></svg>
<div class="a l" style="left:1088px;top:696px">Cliff_tileset</div>
<div class="a l" style="left:1088px;top:712px;letter-spacing:.35px">Extra_Unfinished4</div>
<div class="a l" style="left:1088px;top:728px;letter-spacing:.65px">graphics-tiles-waterflow</div>
<div class="a l" style="left:1088px;top:744px">ground_tiles</div>
<div class="a l" style="left:1088px;top:760px">object- layer</div>
<div class="fold" style="left:1059px;top:1004px"></div><div class="a" style="left:1074px;top:1000px;color:#a8a8a8">Assets/Tiles/Avalon</div>
<div class="p" style="left:1226px;top:1007px;width:50px;height:2px;background:#777"></div>
<div class="p" style="left:1222px;top:1004px;width:9px;height:9px;border-radius:5px;background:#aaa"></div>

<!-- status icons -->
<svg style="left:1818px;top:1021px" width="100" height="18" viewBox="0 0 100 18" fill="none" stroke="#9a9a9a" stroke-width="1.300"><path d="M2 3l14 13M16 3L2 16"/><ellipse cx="9" cy="10" rx="5" ry="6" fill="#9a9a9a"/><ellipse cx="35" cy="4" rx="6" ry="2.500" fill="#9a9a9a"/><path d="M29 8c0 4 12 4 12 0M29 13c0 4 12 4 12 0"/><circle cx="62" cy="9" r="6.500"/><path d="M56 3L68 15"/><circle cx="88" cy="9" r="6.500"/><path d="M85 9l2 2 4-4"/></svg>

<!-- taskbar -->
<div class="p" style="left:0;top:1040px;width:1920px;height:40px;background:#1a1a1a"></div>
<svg style="left:16px;top:1052px" width="16" height="16" viewBox="0 0 16 16" fill="#fff"><path d="M0 2.300L6.500 1.400V7.600H0zM7.300 1.300L16 0V7.600H7.300zM0 8.400H6.500V14.600L0 13.700zM7.300 8.400H16V16L7.300 14.700z"/></svg>
<div class="p" style="left:48px;top:1040px;width:287px;background:#333;border:1px solid #6a6a6a;border-bottom:0;box-sizing:border-box;height:40px"></div>
<svg style="left:60px;top:1051px" width="18" height="18" viewBox="0 0 18 18" fill="none" stroke="#ddd" stroke-width="1.300"><circle cx="11" cy="7" r="5.500"/><path d="M7 11L2 17"/></svg>
<div class="a" style="left:88px;top:1053px;font-size:14.5px;color:#d2d2d2">Escriu aquí per cercar</div>
<svg style="left:352px;top:1052px" width="16" height="16" viewBox="0 0 16 16"><circle cx="8" cy="8" r="6.500" fill="none" stroke="#eee" stroke-width="2"/></svg>
<svg style="left:399px;top:1052px" width="17" height="16" viewBox="0 0 17 16" fill="none" stroke="#eee"><path d="M0 1.500H12M0 14.500H12M2.500 5.500H11.500V10.500H2.500zM15.500 1V4M15.500 6V10M15.500 12V15"/></svg>
<svg style="left:447px;top:1048px" width="24" height="24" viewBox="0 0 24 24"><rect width="24" height="24" rx="3" fill="#f07a28"/><path d="M7 5H11V9H7zM13 5H17V9H13zM7 15H11V19H7zM13 15H17V19H13zM5 11H19V13H5z" fill="none" stroke="#fff" stroke-width="2"/></svg>
<svg style="left:496px;top:1048px" width="24" height="24" viewBox="0 0 24 24"><path d="M2 1H10L12 4H22V23H2z" fill="#f5c84c"/><rect x="2" y="6" width="20" height="17" fill="#fbd764"/><rect x="8" y="14" width="8" height="9" fill="#2b8fd8"/><rect x="2" y="16" width="6" height="2" fill="#2b8fd8"/><rect x="16" y="16" width="6" height="2" fill="#2b8fd8"/></svg>
<svg style="left:545px;top:1048px" width="24" height="24" viewBox="0 0 24 24"><circle cx="12" cy="12" r="12" fill="#dd4437"/><path d="M12 24a12 12 0 0 1-10.400-18L7 14.500 12 24z" fill="#1da462"/><path d="M24 12A12 12 0 0 1 12 24l5-9 0-7h6a12 12 0 0 1 1 4z" fill="#fcc933"/><circle cx="12" cy="12" r="6" fill="#fff"/><circle cx="12" cy="12" r="4.500" fill="#4285f4"/></svg>
<svg style="left:593px;top:1048px" width="26" height="24" viewBox="0 0 26 24"><path d="M18 0L25 3V21L18 24L6 12z" fill="#1f9cf0"/><path d="M18 0V24L8 15L3 19L0 17L6 12L0 7L3 5L8 9z" fill="#0a6fc2"/><path d="M18 6L10 12L18 18z" fill="#1a1a1a"/></svg>
<svg style="left:643px;top:1048px" width="26" height="26" viewBox="0 0 26 26"><circle cx="12" cy="12" r="12" fill="#dd4437"/><path d="M12 24a12 12 0 0 1-10.400-18L7 14.500 12 24z" fill="#1da462"/><path d="M24 12A12 12 0 0 1 12 24l5-9 0-7h6a12 12 0 0 1 1 4z" fill="#fcc933"/><circle cx="12" cy="12" r="6" fill="#fff"/><circle cx="12" cy="12" r="4.500" fill="#4285f4"/><circle cx="18" cy="19" r="7" fill="#7030a8"/></svg>
<div class="a" style="left:658px;top:1061px;font-size:10px;line-height:14px;color:#fff">J</div>
<div class="p" style="left:680px;top:1040px;width:48px;height:40px;background:#3d3d3d"></div>
<svg style="left:693px;top:1048px" width="22" height="24" viewBox="0 0 22 24"><path d="M11 0L21 6V18L11 24L1 18V6z" fill="#111"/><path d="M11 3L18 7.500V16.500L11 21L4 16.500V7.500z" fill="#ddd"/><path d="M11 7V17M7 9.500L11 12L15 9.500" stroke="#222" stroke-width="2" fill="none"/></svg>
<svg style="left:742px;top:1048px" width="23" height="24" viewBox="0 0 23 24"><rect width="23" height="24" fill="#7fb4e8"/><rect x="1.500" y="1.500" width="20" height="21" fill="#0c1a40"/></svg>
<div class="a b" style="left:746px;top:1052px;font-size:12px;color:#7fc4f0">Ps</div>
<svg style="left:790px;top:1048px" width="26" height="26" viewBox="0 0 26 26"><circle cx="12" cy="12" r="12" fill="#dd4437"/><path d="M12 24a12 12 0 0 1-10.400-18L7 14.500 12 24z" fill="#1da462"/><path d="M24 12A12 12 0 0 1 12 24l5-9 0-7h6a12 12 0 0 1 1 4z" fill="#fcc933"/><circle cx="12" cy="12" r="6" fill="#fff"/><circle cx="12" cy="12" r="4.500" fill="#4285f4"/><circle cx="18" cy="17" r="6" fill="#111"/><rect x="13" y="19" width="9" height="6" fill="#d9a08a"/></svg>
<div class="p" style="left:488px;top:1078px;width:40px;height:2px;background:#76b9ed"></div>
<div class="p" style="left:635px;top:1078px;width:40px;height:2px;background:#76b9ed"></div>
<div class="p" style="left:680px;top:1078px;width:48px;height:2px;background:#76b9ed"></div>
<div class="p" style="left:733px;top:1078px;width:40px;height:2px;background:#76b9ed"></div>
<div class="p" style="left:782px;top:1078px;width:40px;height:2px;background:#76b9ed"></div>
<svg style="left:1478px;top:1050px" width="22" height="20" viewBox="0 0 22 20"><circle cx="10" cy="10" r="10" fill="#f39c1f"/><path d="M8 16a3 3 0 0 1 1-6 4 4 0 0 1 7-1 3.500 3.500 0 0 1 5 3.500c0 2-1 3.500-3 3.500z" fill="#cfe0f8"/></svg>
<div class="a" style="left:1508px;top:1052px;font-size:14px;color:#e4e4e4">20°C</div>
<div class="a" style="left:1547px;top:1052px;font-size:14px;color:#e4e4e4">Mayorm. soleado</div>
<svg style="left:1676px;top:1053px" width="110" height="16" viewBox="0 0 110 16" fill="none" stroke="#e4e4e4" stroke-width="1.200"><path d="M1 11L7 5L13 11"/><path d="M24 5h12v8H24z"/><path d="M26 7h7v4h-7z" fill="#e4e4e4"/><path d="M21 3v4M24 3v4M19 7h7" /><path d="M50 13a10 10 0 0 1 10-9M53 13a7 7 0 0 1 7-6M56 13a4 4 0 0 1 4-3"/><path d="M72 6h3l4-3v10l-4-3h-3zM82 6l4 4M86 6l-4 4"/></svg>
<div class="a" style="left:1774px;top:1052px;font-size:13px;color:#e4e4e4">CAT</div>
<div class="a" style="left:1820px;top:1043px;font-size:12px;color:#e4e4e4">16:41</div>
<div class="a" style="left:1809px;top:1061px;font-size:12px;color:#e4e4e4;letter-spacing:-.1px">18/1/2024</div>
<svg style="left:1879px;top:1051px" width="16" height="18" viewBox="0 0 16 18"><path d="M0 0H16V13H11L8 17L5 13H0z" fill="#fff"/><path d="M3 4H13M3 7H13M3 10H10" stroke="#333"/></svg>

<!-- arrows -->
<svg style="left:0;top:0" width="1920" height="1080" viewBox="0 0 1920 1080">
<path d="M1531 339L456 241" stroke="#fff" stroke-width="2.500"/>
<path d="M443 238L463 233L461 247z" fill="#fff"/>
<path d="M1523 344L662 434" stroke="#fff" stroke-width="2.500"/>
<path d="M650 437L669 429L670 441z" fill="#fff"/>
<path d="M1531 339L462 466" stroke="#fff" stroke-width="2.500"/>
<path d="M446 470L466 463L467 477z" fill="#fff"/>
<path d="M1445 47L1505 92" stroke="#fff" stroke-width="2"/>
<path d="M1513 100L1497 92L1505 83z" fill="#fff"/>
</svg>
</body></html>
